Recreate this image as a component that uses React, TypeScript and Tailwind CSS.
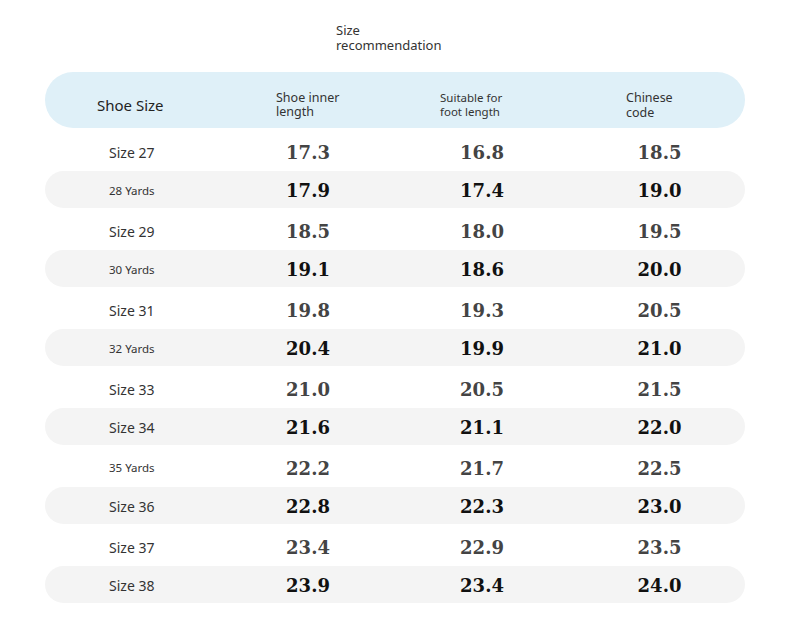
const rows = [
  { label: "Size 27", small: false, inner: "17.3", foot: "16.8", cn: "18.5" },
  { label: "28 Yards", small: true, inner: "17.9", foot: "17.4", cn: "19.0" },
  { label: "Size 29", small: false, inner: "18.5", foot: "18.0", cn: "19.5" },
  { label: "30 Yards", small: true, inner: "19.1", foot: "18.6", cn: "20.0" },
  { label: "Size 31", small: false, inner: "19.8", foot: "19.3", cn: "20.5" },
  { label: "32 Yards", small: true, inner: "20.4", foot: "19.9", cn: "21.0" },
  { label: "Size 33", small: false, inner: "21.0", foot: "20.5", cn: "21.5" },
  { label: "Size 34", small: false, inner: "21.6", foot: "21.1", cn: "22.0" },
  { label: "35 Yards", small: true, inner: "22.2", foot: "21.7", cn: "22.5" },
  { label: "Size 36", small: false, inner: "22.8", foot: "22.3", cn: "23.0" },
  { label: "Size 37", small: false, inner: "23.4", foot: "22.9", cn: "23.5" },
  { label: "Size 38", small: false, inner: "23.9", foot: "23.4", cn: "24.0" },
];

const App = () => {
  return (
    <div className="w-[790px] h-[623px] bg-white font-['Noto_Sans',sans-serif] text-[#333]">
      {/* Title */}
      <div className="pt-[23px] pl-[336px] text-[13px] leading-[15px] text-[#333]">
        <p>Size</p>
        <p>recommendation</p>
      </div>

      <div className="mx-[45px] mt-[19px] w-[700px]">
        {/* Header */}
        <div className="h-[56px] rounded-full bg-[#dff0f8] grid grid-cols-[181px_164px_184px_171px] items-center pt-[10px]">
          <div className="pl-[52px] text-[15px] leading-[18px] text-[#222]">
            Shoe Size
          </div>
          <div className="pl-[50px] text-[12.5px] leading-[14.5px] text-[#333]">
            Shoe inner
            <br />
            length
          </div>
          <div className="pl-[50px] text-[11.5px] leading-[14.5px] text-[#333]">
            Suitable for
            <br />
            foot length
          </div>
          <div className="pl-[52px] text-[12.5px] leading-[15px] text-[#333]">
            Chinese
            <br />
            code
          </div>
        </div>

        {/* Rows */}
        <div className="flex flex-col gap-[2.5px] pt-[3px]">
          {rows.map((r, i) => {
            const striped = i % 2 === 1;
            return (
              <div
                key={r.label}
                className={
                  striped
                    ? "h-[37px] pt-[3px] rounded-full bg-[#f4f4f4] grid grid-cols-[181px_164px_184px_171px] items-center"
                    : "h-[37px] pt-[5px] rounded-full bg-white grid grid-cols-[181px_164px_184px_171px] items-center"
                }
              >
                <div
                  className={
                    r.small
                      ? "pl-[64px] text-[11.5px] text-[#333]"
                      : "pl-[64px] text-[14px] text-[#333]"
                  }
                >
                  {r.label}
                </div>
                {[r.inner, r.foot, r.cn].map((v, j) => (
                  <div
                    key={j}
                    className={
                      striped
                        ? "text-center font-['DejaVu_Serif',serif] font-bold text-[18px] text-[#111]"
                        : "text-center font-['DejaVu_Serif',serif] font-bold text-[18px] text-[#444]"
                    }
                  >
                    {v}
                  </div>
                ))}
              </div>
            );
          })}
        </div>
      </div>
    </div>
  );
};

export default App;
